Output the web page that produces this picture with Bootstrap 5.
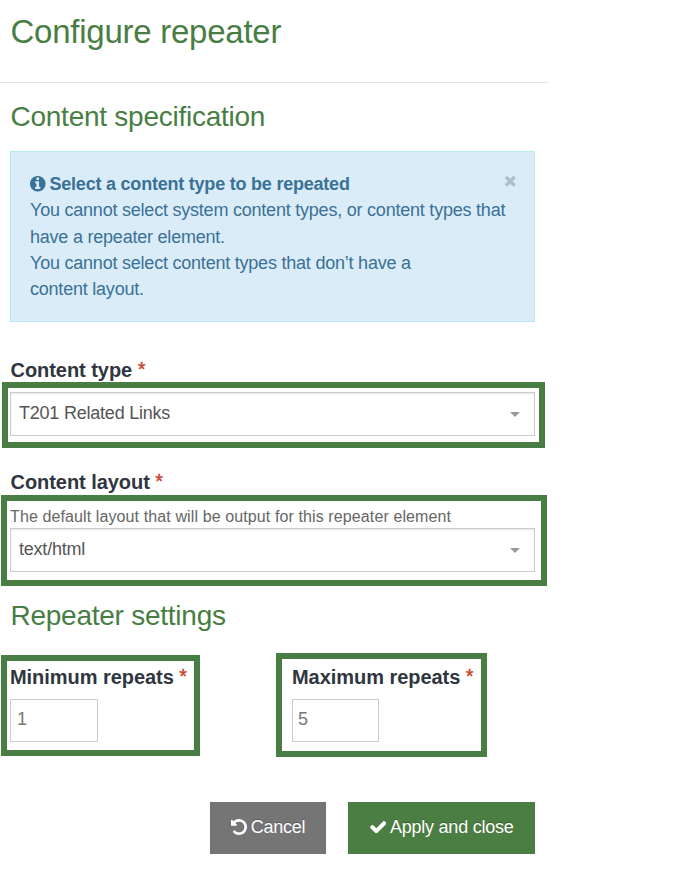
<!DOCTYPE html>
<html lang="en">
<head>
<meta charset="utf-8">
<meta name="viewport" content="width=device-width, initial-scale=1">
<title>Configure repeater</title>
<link href="https://cdn.jsdelivr.net/npm/bootstrap@5.3.0/dist/css/bootstrap.min.css" rel="stylesheet">
<style>
body{font-family:"Liberation Sans",Arial,sans-serif;color:#555;font-size:18px;letter-spacing:-.2px;overflow:hidden}
svg{fill:currentColor;display:block;flex:none}
.page-head{width:548px;height:83px;padding:10px 0 0 10.5px;border-bottom:1px solid #e3e3e3}
h1,h2{color:#487e44;font-weight:400;margin:0;white-space:nowrap}
h1{font-size:33px;line-height:44px;letter-spacing:-.25px}
h2{font-size:28px;line-height:34px;letter-spacing:-.25px;margin-left:10.5px}
.spec-title{margin-top:17px}
.notice{width:525px;height:171px;margin:17px 0 0 10px;padding:19px 18px 0 19px;background:#daecf8;border:1px solid #bce8f1;border-radius:0;color:#3a7196;line-height:26.25px;letter-spacing:-.22px}
.notice .dismiss{color:#adbfca;padding:5px 1.5px 0 0}
.field-label{font-weight:700;font-size:20px;line-height:26px;color:#2f3640;letter-spacing:-.05px;white-space:nowrap}
.type-label{margin:35px 0 -1px 10.5px}
.layout-label{margin:21px 0 0 10.5px}
.settings-title{margin-top:13px}
.settings-row{margin-top:20px}
.req{color:#c9472c;font-weight:400;-webkit-text-stroke:.4px #c9472c;vertical-align:1px;line-height:1}
.outlined{border:6px solid #487e44}
.hl-type{width:543px;height:66px;margin-left:2px;padding:4px 0 0 2px}
.hl-layout{width:546px;height:91px;margin-left:1px;padding:4px 0 0 3px}
.hl-min{width:199px;height:101px;margin:2px 0 0 1px;padding:3px 0 0 3px}
.hl-max{width:211px;height:104px;margin-left:76px;padding:5px 0 0 10px}
.picker{width:525px;height:44px;padding:0 14px 1px 8px;border:1px solid #ccc;border-radius:0;box-shadow:inset 0 1px 2px rgba(0,0,0,.1);background:#fff;color:#555;text-align:left;font-size:18px;letter-spacing:-.22px}
.arrow{border:5px solid transparent;border-top-color:#999;border-bottom:0;margin-top:2px}
.hint{font-size:16px;line-height:23px;color:#666;letter-spacing:.11px;white-space:nowrap}
.num{width:88px;height:43px;margin-top:9px;padding:0 6px 3px;border:1px solid #ccc;border-radius:0;font-size:18px;color:#777}
.hl-max .num{width:87px;padding-left:5px}
.act{height:52px;border:0;border-radius:0;color:#fff;font-size:18px;letter-spacing:-.25px;padding:0 0 2px;text-shadow:0 -1px 0 rgba(0,0,0,.25)}
.act:hover{color:#fff}
.act-cancel,.act-cancel:hover{width:116px;background:#757575}
.act-apply,.act-apply:hover{width:187px;background:#4b7e42}
.actions{margin:45px 0 0 210px;gap:22px}
</style>
</head>
<body class="bg-white">
<header class="page-head"><h1>Configure repeater</h1></header>
<main>
  <h2 class="spec-title">Content specification</h2>
  <div class="alert notice mb-0 d-flex justify-content-between align-items-start">
    <div class="text-nowrap">
      <div class="d-flex align-items-center fw-bold"><svg width="15.5" height="15.5" viewBox="128 128 1536 1536"><path d="M1152 1376v-160q0-14-9-23t-23-9h-96v-512q0-14-9-23t-23-9h-320q-14 0-23 9t-9 23v160q0 14 9 23t23 9h96v320h-96q-14 0-23 9t-9 23v160q0 14 9 23t23 9h448q14 0 23-9t9-23zM1024 480v-160q0-14-9-23t-23-9h-192q-14 0-23 9t-9 23v160q0 14 9 23t23 9h192q14 0 23-9t9-23zM1664 896q0 209-103 385.5t-279.5 279.5-385.5 103-385.5-103-279.5-279.5-103-385.5 103-385.5 279.5-279.5 385.5-103 385.5 103 279.5 279.5 103 385.5z"/></svg><span class="ms-1">Select a content type to be repeated</span></div>
      You cannot select system content types, or content types that<br>have a repeater element.<br>You cannot select content types that don’t have a<br>content layout.
    </div>
    <button type="button" class="btn border-0 dismiss" aria-label="Close"><svg width="10.5" height="10.5" viewBox="302 366 1188 1188"><path d="M1490 1322q0 40-28 68l-136 136q-28 28-68 28t-68-28l-294-294-294 294q-28 28-68 28t-68-28l-136-136q-28-28-28-68t28-68l294-294-294-294q-28-28-28-68t28-68l136-136q28-28 68-28t68 28l294 294 294-294q28-28 68-28t68 28l136 136q28 28 28 68t-28 68l-294 294 294 294q28 28 28 68z"/></svg></button>
  </div>

  <div class="field-label type-label">Content type <span class="req">*</span></div>
  <div class="outlined hl-type">
    <button type="button" class="btn picker d-flex align-items-center justify-content-between"><span>T201 Related Links</span><span class="arrow"></span></button>
  </div>

  <div class="field-label layout-label">Content layout <span class="req">*</span></div>
  <div class="outlined hl-layout">
    <div class="hint">The default layout that will be output for this repeater element</div>
    <button type="button" class="btn picker d-flex align-items-center justify-content-between"><span>text/html</span><span class="arrow"></span></button>
  </div>

  <h2 class="settings-title">Repeater settings</h2>
  <div class="d-flex align-items-start settings-row">
    <div class="outlined hl-min">
      <label class="field-label d-block" for="min">Minimum repeats <span class="req">*</span></label>
      <input class="form-control num" id="min" value="1">
    </div>
    <div class="outlined hl-max">
      <label class="field-label d-block" for="max">Maximum repeats <span class="req">*</span></label>
      <input class="form-control num" id="max" value="5">
    </div>
  </div>

  <div class="d-flex actions">
    <button type="button" class="btn act act-cancel d-flex align-items-center justify-content-center gap-1"><svg width="16" height="16" viewBox="128 128 1536 1536"><path d="M1664 896q0 156-61 298t-164 245-245 164-298 61q-172 0-327-72.5t-264-204.5q-7-10-6.5-22.5t8.5-20.5l137-138q10-9 25-9 16 2 23 12 73 95 179 147t225 52q104 0 198.5-40.5t163.5-109.5 109.5-163.5 40.5-198.5-40.5-198.5-109.5-163.5-163.5-109.5-198.5-40.5q-98 0-188 35.5t-160 101.5l137 138q31 30 14 69-17 40-59 40h-448q-26 0-45-19t-19-45v-448q0-42 40-59 39-17 69 14l130 129q107-101 244.5-156.5t284.5-55.5q156 0 298 61t245 164 164 245 61 298z"/></svg>Cancel</button>
    <button type="button" class="btn act act-apply d-flex align-items-center justify-content-center gap-1"><svg width="16.5" height="12.6" viewBox="121 334 1550 1188"><path d="M1671 566q0 40-28 68l-724 724-136 136q-28 28-68 28t-68-28l-136-136-362-362q-28-28-28-68t28-68l136-136q28-28 68-28t68 28l294 295 656-657q28-28 68-28t68 28l136 136q28 28 28 68z"/></svg>Apply and close</button>
  </div>
</main>
<script src="https://cdn.jsdelivr.net/npm/bootstrap@5.3.0/dist/js/bootstrap.bundle.min.js"></script>
</body>
</html>
